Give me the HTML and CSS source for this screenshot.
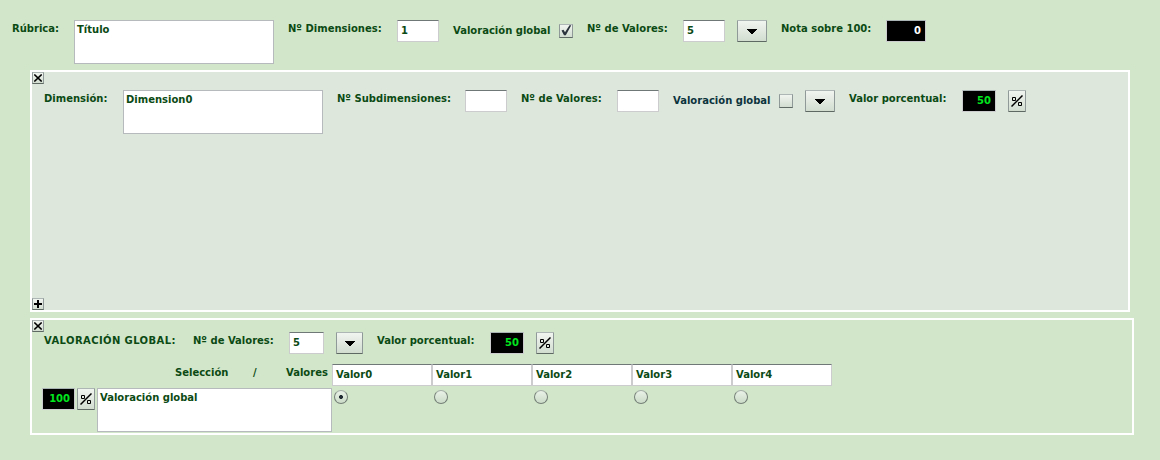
FILE: index.html
```
<!DOCTYPE html>
<html lang="es">
<head>
<meta charset="utf-8">
<title>Rúbrica</title>
<link rel="stylesheet" href="styles.css">
</head>
<body>
<svg width="0" height="0" class="defs">
  <symbol id="arrow" viewBox="0 0 10 5"><path d="M0 0h10v1H9v1H8v1H7v1H6v1H4V4H3V3H2V2H1V1H0z"/></symbol>
  <symbol id="percent" viewBox="0 0 12 12"><path d="M0.500 11.500 11.500 0.500" fill="none" stroke="#000" stroke-width="1.500"/><path d="M1.500 2.500h3v3h-3zM7.500 7.500h3v3h-3z" fill="none" stroke="#000"/></symbol>
  <symbol id="close" viewBox="0 0 8 8"><path d="M0.300 0.500 7.700 7.500M7.700 0.500 0.300 7.500" stroke="#000" stroke-width="1.600"/></symbol>
  <symbol id="plus" viewBox="0 0 8 8"><path d="M4 0v8M0 4h8" stroke="#000" stroke-width="2"/></symbol>
  <symbol id="check" viewBox="0 0 12 12"><path d="M1.500 5.500 3.500 4.800 5 7.300 9.500 0.300 11.300 0.300 5.800 10.300 4 10.300z" fill="#2b333c"/></symbol>
</svg>
<main class="page">
  <header class="row row-main">
    <span class="label">Rúbrica:</span>
    <div class="area">Título</div>
    <span class="label">Nº Dimensiones:</span>
    <div class="input">1</div>
    <span class="label low">Valoración global</span>
    <span class="box checkbox"><svg width="12" height="12"><use href="#check"/></svg></span>
    <span class="label">Nº de Valores:</span>
    <div class="input">5</div>
    <span class="box button"><svg width="10" height="5"><use href="#arrow"/></svg></span>
    <span class="label">Nota sobre 100:</span>
    <div class="input score total">0</div>
  </header>

  <section class="panel dimension">
    <span class="box mini"><svg width="8" height="8"><use href="#close"/></svg></span>
    <div class="row row-dimension">
      <span class="label">Dimensión:</span>
      <div class="area">Dimension0</div>
      <span class="label">Nº Subdimensiones:</span>
      <div class="input"></div>
      <span class="label">Nº de Valores:</span>
      <div class="input"></div>
      <span class="label low dark">Valoración global</span>
      <span class="box checkbox"></span>
      <span class="box button"><svg width="10" height="5"><use href="#arrow"/></svg></span>
      <span class="label">Valor porcentual:</span>
      <div class="input score">50</div>
      <span class="box button percent"><svg width="12" height="12"><use href="#percent"/></svg></span>
    </div>
    <span class="box mini"><svg width="8" height="8"><use href="#plus"/></svg></span>
  </section>

  <section class="panel global">
    <span class="box mini"><svg width="8" height="8"><use href="#close"/></svg></span>
    <div class="row row-global">
      <span class="label caps">VALORACIÓN GLOBAL:</span>
      <span class="label">Nº de Valores:</span>
      <div class="input">5</div>
      <span class="box button"><svg width="10" height="5"><use href="#arrow"/></svg></span>
      <span class="label">Valor porcentual:</span>
      <div class="input score">50</div>
      <span class="box button percent"><svg width="12" height="12"><use href="#percent"/></svg></span>
    </div>
    <div class="row row-values">
      <span class="label">Selección</span>
      <span class="label">/</span>
      <span class="label">Valores</span>
      <div class="input">Valor0</div>
      <div class="input">Valor1</div>
      <div class="input">Valor2</div>
      <div class="input">Valor3</div>
      <div class="input">Valor4</div>
    </div>
    <div class="row row-choice">
      <div class="input score">100</div>
      <span class="box button percent"><svg width="12" height="12"><use href="#percent"/></svg></span>
      <div class="area">Valoración global</div>
      <span class="radio selected"></span>
      <span class="radio"></span>
      <span class="radio"></span>
      <span class="radio"></span>
      <span class="radio"></span>
    </div>
  </section>
</main>
</body>
</html>
```
FILE: styles.css
```
* { box-sizing: border-box; }
body {
  margin: 0;
  background: #d2e6c9;
  color: #0b4a14;
  font: bold 10px/12px "DejaVu Sans", Verdana, sans-serif;
}
.defs { position: absolute; }
svg { display: block; }
.page {
  width: 1160px;
  height: 460px;
  padding-top: 20px;
  overflow: hidden;
}
.row {
  display: grid;
  justify-content: start;
  align-items: start;
  white-space: nowrap;
}
.row-main {
  height: 50px;
  padding-left: 12px;
  grid-template-columns: 62px 214px 109px 56px 106px 28px 96px 54px 44px 105px 40px;
}
.label { padding-top: 3px; }
.low { padding-top: 5px; }
.dark { color: #0b333c; }
.caps { letter-spacing: 0.4px; }
.area {
  width: 200px;
  height: 44px;
  padding: 3px 2px;
  border: 1px solid #b7babc;
  background: #fff;
}
.input {
  width: 42px;
  height: 22px;
  padding: 4px 3px;
  border: 1px solid #cccccf;
  border-top-color: #6f7777;
  background: #fff;
}
.score {
  width: 34px;
  padding-right: 4px;
  background: #000;
  color: #00e61e;
  text-align: right;
  border-top-color: #aab3b3;
}
.total { width: 40px; color: #fff; }
.box {
  display: flex;
  align-items: center;
  justify-content: center;
  border: 1px solid #5f6964;
  border-top-color: #aeb6b5;
  border-left-color: #8f9997;
  border-right-color: #8f9997;
  background: linear-gradient(#f1f5f0, #d2ddd0);
}
.button { width: 30px; height: 22px; border-radius: 1px; }
.percent { width: 18px; }
.checkbox { width: 14px; height: 14px; margin-top: 4px; }
.mini { width: 12px; height: 12px; }
.panel {
  display: flex;
  flex-direction: column;
  margin-left: 30px;
  border: 2px solid #fff;
}
.dimension { width: 1100px; height: 242px; background: #dde7dc; }
.row-dimension {
  flex: 1;
  padding: 6px 0 0 12px;
  grid-template-columns: 79px 214px 128px 56px 96px 56px 106px 26px 44px 113px 46px 18px;
}
.global { width: 1104px; height: 117px; margin-top: 6px; }
.row-global {
  height: 32px;
  padding-left: 12px;
  grid-template-columns: 149px 96px 47px 41px 113px 46px 18px;
}
.row-global .input:not(.score) { width: 35px; }
.row-global .button:not(.percent) { width: 27px; }
.row-values {
  height: 24px;
  padding-left: 143px;
  grid-template-columns: 78px 33px 46px repeat(5, 100px);
}
.row-values .input { width: 100px; }
.row-choice {
  padding-left: 10px;
  grid-template-columns: 35px 20px 237px repeat(5, 100px);
}
.row-choice .score { width: 33px; }
.row-choice .area { width: 235px; }
.radio {
  width: 14px;
  height: 14px;
  margin-top: 2px;
  border: 1px solid #747f77;
  border-top-color: #a5b0a8;
  border-radius: 50%;
  background: linear-gradient(#eaf1e7, #cbdcc8);
}
.selected {
  background: radial-gradient(circle, #222b33 0 1.6px, transparent 2.3px), linear-gradient(#eaf1e7, #cbdcc8);
}
```
